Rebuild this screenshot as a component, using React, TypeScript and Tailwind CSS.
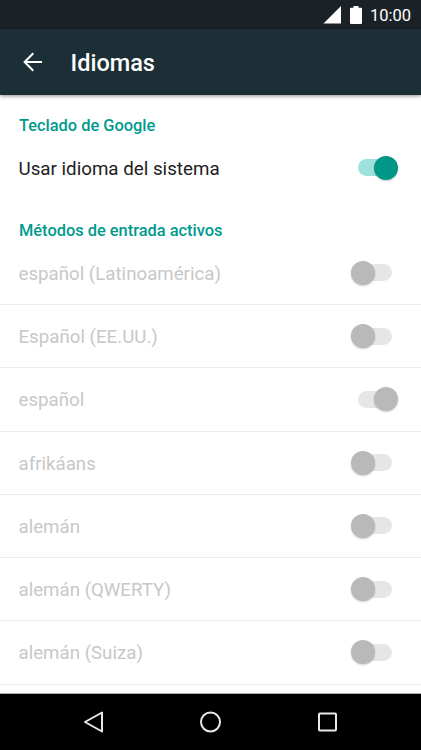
import React from "react";

type ToggleProps = { on: boolean; disabled?: boolean; label: string };

function Toggle({ on, disabled = false, label }: ToggleProps) {
  const track = disabled ? "bg-[#e6e6e6]" : "bg-[#9fe1dc]";
  const thumb = disabled ? "bg-[#b9b9b9]" : "bg-[#009688]";
  return (
    <button
      type="button"
      role="switch"
      aria-checked={on}
      aria-label={label}
      disabled={disabled}
      className={`flex h-6 w-12 shrink-0 items-center ${on ? "justify-end" : "justify-start"}`}
    >
      <span className={`h-[17px] w-[34px] rounded-full ${track} flex items-center ${on ? "mr-[7px] justify-end" : "ml-[7px] justify-start"}`}>
        <span
          className={`size-6 shrink-0 rounded-full shadow-[0_1px_2px_rgba(0,0,0,0.2)] ${thumb} ${on ? "-mr-[6px]" : "-ml-[7px]"}`}
        />
      </span>
    </button>
  );
}

const languages = [
  { name: "español (Latinoamérica)", on: false },
  { name: "Español (EE.UU.)", on: false },
  { name: "español", on: true },
  { name: "afrikáans", on: false },
  { name: "alemán", on: false },
  { name: "alemán (QWERTY)", on: false },
  { name: "alemán (Suiza)", on: false },
];

export default function App() {
  return (
    <div className="flex h-[750px] w-[421px] flex-col overflow-hidden bg-white font-[Roboto,sans-serif]">
      <div className="flex h-[29px] shrink-0 items-center justify-end bg-[#1a2227] pr-[10px] text-white">
        <svg className="mt-[1px] mr-[9px] h-[18px] w-[18px]" viewBox="0 0 18 18" fill="currentColor">
          <path d="M18 0v17.5H0.500z" />
        </svg>
        <svg className="mr-[8px] h-[18px] w-[12px]" viewBox="0 0 12 18" fill="currentColor">
          <path d="M3.5 0h5v1.7H11q1 0 1 1V17q0 1-1 1H1q-1 0-1-1V2.700q0-1 1-1h2.500z" />
        </svg>
        <span className="mt-[2px] text-[16.5px] leading-5">10:00</span>
      </div>
      <header className="z-10 flex h-[66px] shrink-0 items-center bg-[#1c2f36] pl-[23px] text-white shadow-[0_1px_4px_rgba(0,0,0,0.45)]">
        <svg className="h-[20px] w-[20px]" viewBox="0 0 20 20" fill="none" stroke="currentColor" strokeWidth="2">
          <path d="M19 10H2M10.300 1.300L1.600 10l8.700 8.700" />
        </svg>
        <h1 className="ml-[27.500px] pt-[2px] text-[23.5px] leading-7 font-medium">Idiomas</h1>
      </header>
      <main className="flex min-h-0 flex-1 flex-col overflow-hidden">
        <h2 className="mt-[21px] shrink-0 pl-[19px] text-[16.4px] leading-5 font-medium text-[#009a8d]">Teclado de Google</h2>
        <div className="mt-[19.500px] flex h-6 shrink-0 items-center justify-between pr-[22px] pl-[18.500px]">
          <span className="pt-[2px] text-[18.75px] leading-6 text-[#212121]">Usar idioma del sistema</span>
          <Toggle on label="Usar idioma del sistema" />
        </div>
        <h2 className="mt-[41.300px] shrink-0 pl-[19px] text-[16.4px] leading-5 font-medium text-[#009a8d]">
          Métodos de entrada activos
        </h2>
        <ul className="mt-[1px] shrink-0">
          {languages.map(({ name, on }) => (
            <li
              key={name}
              className="flex h-[63.250px] items-center justify-between border-b border-[#ececec] pr-[22px] pl-[18.500px]"
            >
              <span className="pt-[2px] text-[18.7px] leading-6 text-[#c8c8c8]">{name}</span>
              <Toggle on={on} disabled label={name} />
            </li>
          ))}
        </ul>
      </main>
      <nav className="flex h-[57px] shrink-0 items-center border-t border-[#aaaaaa] bg-black pl-[83px] text-[#e8e8e8]">
        <svg className="h-[24px] w-[22px]" viewBox="0 0 22 24" fill="none" stroke="currentColor" strokeWidth="2" strokeLinejoin="round">
          <path d="M19 2.500v19L2 12z" />
        </svg>
        <svg className="ml-[94px] h-[24px] w-[24px]" viewBox="0 0 24 24" fill="none" stroke="currentColor" strokeWidth="2">
          <circle cx="11.500" cy="12" r="9.500" />
        </svg>
        <svg className="ml-[93px] h-[24px] w-[24px]" viewBox="0 0 24 24" fill="none" stroke="currentColor" strokeWidth="2">
          <rect x="3" y="3.500" width="17" height="17" rx="0.800" />
        </svg>
      </nav>
    </div>
  );
}
